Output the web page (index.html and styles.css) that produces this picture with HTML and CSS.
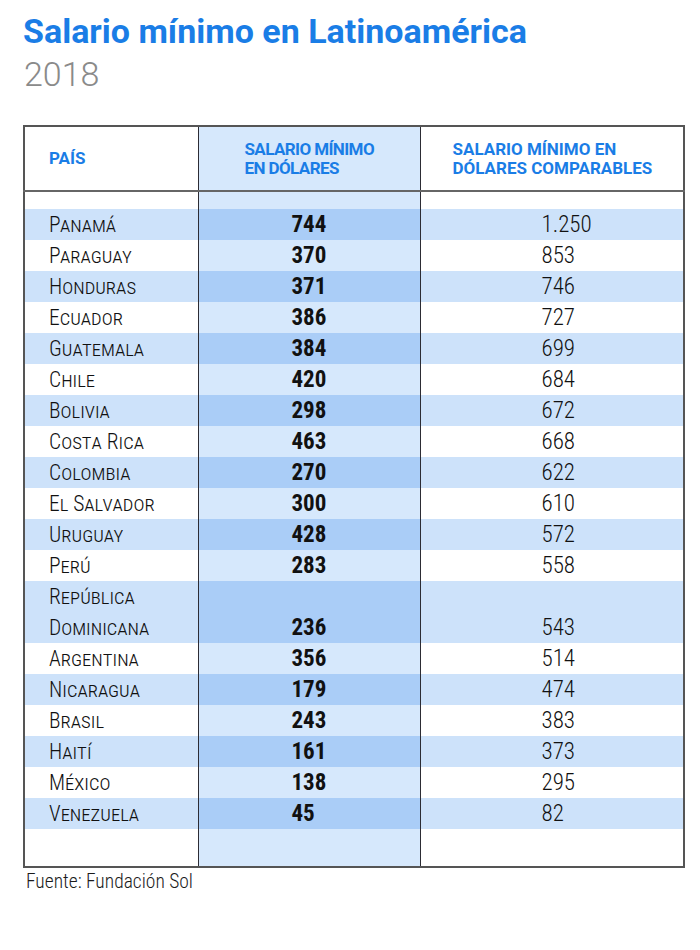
FILE: index.html
```html
<!DOCTYPE html>
<html lang="es">
<head>
<meta charset="utf-8">
<title>Salario mínimo en Latinoamérica</title>
<link rel="stylesheet" href="styles.css">
</head>
<body>
<div class="page">
  <h1 class="title">Salario mínimo en Latinoamérica</h1>
  <div class="year">2018</div>
  <table class="wage">
    <colgroup>
      <col class="c1"><col class="c2"><col class="c3">
    </colgroup>
    <thead>
      <tr class="head">
        <th class="h1">PAÍS</th>
        <th class="h2">SALARIO MÍNIMO<br>EN DÓLARES</th>
        <th class="h3">SALARIO MÍNIMO EN<br>DÓLARES COMPARABLES</th>
      </tr>
    </thead>
    <tbody>
      <tr class="spacer top"><td></td><td class="mid"></td><td></td></tr>
      <tr class="band"><td class="name">Panamá</td><td class="mid">744</td><td class="cmp">1.250</td></tr>
      <tr><td class="name">Paraguay</td><td class="mid">370</td><td class="cmp">853</td></tr>
      <tr class="band"><td class="name">Honduras</td><td class="mid">371</td><td class="cmp">746</td></tr>
      <tr><td class="name">Ecuador</td><td class="mid">386</td><td class="cmp">727</td></tr>
      <tr class="band"><td class="name">Guatemala</td><td class="mid">384</td><td class="cmp">699</td></tr>
      <tr><td class="name">Chile</td><td class="mid">420</td><td class="cmp">684</td></tr>
      <tr class="band"><td class="name">Bolivia</td><td class="mid">298</td><td class="cmp">672</td></tr>
      <tr><td class="name">Costa Rica</td><td class="mid">463</td><td class="cmp">668</td></tr>
      <tr class="band"><td class="name">Colombia</td><td class="mid">270</td><td class="cmp">622</td></tr>
      <tr><td class="name">El Salvador</td><td class="mid">300</td><td class="cmp">610</td></tr>
      <tr class="band"><td class="name">Uruguay</td><td class="mid">428</td><td class="cmp">572</td></tr>
      <tr><td class="name">Perú</td><td class="mid">283</td><td class="cmp">558</td></tr>
      <tr class="band double"><td class="name">República<br>Dominicana</td><td class="mid">236</td><td class="cmp">543</td></tr>
      <tr><td class="name">Argentina</td><td class="mid">356</td><td class="cmp">514</td></tr>
      <tr class="band"><td class="name">Nicaragua</td><td class="mid">179</td><td class="cmp">474</td></tr>
      <tr><td class="name">Brasil</td><td class="mid">243</td><td class="cmp">383</td></tr>
      <tr class="band"><td class="name">Haití</td><td class="mid">161</td><td class="cmp">373</td></tr>
      <tr><td class="name">México</td><td class="mid">138</td><td class="cmp">295</td></tr>
      <tr class="band"><td class="name">Venezuela</td><td class="mid">45</td><td class="cmp">82</td></tr>
      <tr class="spacer bottom"><td></td><td class="mid"></td><td></td></tr>
    </tbody>
  </table>
  <p class="source">Fuente: Fundación Sol</p>
</div>
</body>
</html>
```

FILE: styles.css
```css
html, body {
  margin: 0;
  padding: 0;
  background: #ffffff;
}

.page {
  padding: 11px 0 0 23px;
  font-family: "Roboto Condensed", "Liberation Sans Narrow", Roboto, "Liberation Sans", sans-serif;
  color: #1b1b1b;
}

.title {
  margin: 0;
  font-family: Roboto, "Liberation Sans", sans-serif;
  font-weight: 700;
  font-size: 34px;
  line-height: 40px;
  color: #1a7de6;
}

.year {
  margin: 3px 0 0 1px;
  font-family: Roboto, "Liberation Sans", sans-serif;
  font-weight: 300;
  font-size: 34px;
  line-height: 40px;
  color: #8a8a8a;
}

.wage {
  margin-top: 31px;
  width: 660px;
  border-collapse: collapse;
  table-layout: fixed;
  border: 2px solid #555555;
}

.c1 { width: 174px; }
.c2 { width: 222px; }
.c3 { width: 264px; }

.wage td, .wage th {
  padding: 0;
}

.wage td + td, .wage th + th {
  border-left: 1px solid #2c2c34;
}

.head {
  height: 65px;
  border-bottom: 2px solid #666666;
}

.head th {
  text-align: left;
  vertical-align: middle;
  font-family: Roboto, "Liberation Sans", sans-serif;
  font-weight: 700;
  font-size: 17px;
  line-height: 19px;
  color: #1a7de6;
}

.h1 { padding-left: 24px !important; }
.h2 {
  padding-left: 46px !important;
  background: #d6e8fc;
  letter-spacing: -0.6px;
}
.h3 { padding-left: 32px !important; }

.spacer.top { height: 18px; }
.spacer.bottom { height: 38px; }
.spacer .mid { background: #d6e8fc; }

.wage tbody tr {
  height: 31px;
}

.wage tbody tr.double {
  height: 62px;
}

.band { background: #cde2fa; }

.name {
  padding-left: 24px !important;
  font-variant: small-caps;
  font-weight: 300;
  font-size: 21.5px;
  line-height: 31px;
  vertical-align: middle;
  color: #111111;
}

.mid {
  text-align: left;
  padding-left: 93px !important;
  font-weight: 700;
  font-size: 23px;
  line-height: 31px;
  vertical-align: bottom;
  background: #d6e8fc;
  color: #111111;
}

.band .mid { background: #aacdf7; }

.cmp {
  text-align: left;
  padding-left: 121px !important;
  font-weight: 300;
  font-size: 23px;
  line-height: 31px;
  vertical-align: bottom;
  color: #111111;
}

.source {
  margin: 3px 0 0 3px;
  font-weight: 300;
  font-size: 19.5px;
  line-height: 22px;
  color: #1b1b1b;
}
```
